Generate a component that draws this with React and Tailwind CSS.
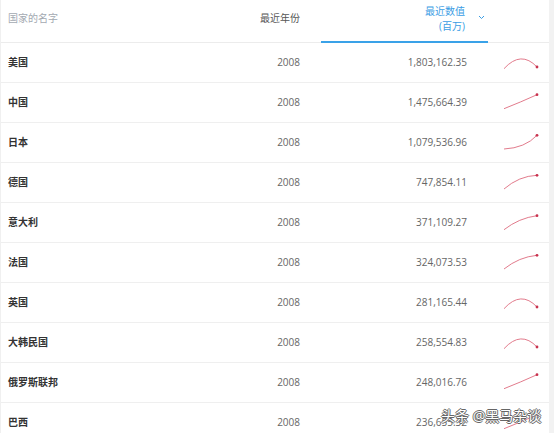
const font = { fontFamily: '"Open Sans", "Noto Sans CJK SC", sans-serif' };

const rows = [
  { name: "美国", year: "2008", value: "1,803,162.35", spark: "M3 15.7 Q20 -3 36 14", end: [36, 14] },
  { name: "中国", year: "2008", value: "1,475,664.39", spark: "M3 15.7 Q20 9 36 1.7", end: [36, 1.7] },
  { name: "日本", year: "2008", value: "1,079,536.96", spark: "M3 16 Q24 15 36 2.3", end: [36, 2.3] },
  { name: "德国", year: "2008", value: "747,854.11", spark: "M3 16 Q18 3 36 2.3", end: [36, 2.3] },
  { name: "意大利", year: "2008", value: "371,109.27", spark: "M3 16.7 Q18 5 36 2.7", end: [36, 2.7] },
  { name: "法国", year: "2008", value: "324,073.53", spark: "M3 16 Q18 4 36 2.3", end: [36, 2.3] },
  { name: "英国", year: "2008", value: "281,165.44", spark: "M3 15.7 Q20 -3 36 14", end: [36, 14] },
  { name: "大韩民国", year: "2008", value: "258,554.83", spark: "M3 15.7 Q20 -3 36 14", end: [36, 14] },
  { name: "俄罗斯联邦", year: "2008", value: "248,016.76", spark: "M3 15.7 Q20 9 36 1.7", end: [36, 1.7] },
  { name: "巴西", year: "2008", value: "236,655.32", spark: "M3 15.7 Q20 9 36 1.7", end: [36, 1.7] },
];

const Spark = ({ d, end }) => (
  <svg width="40" height="20" viewBox="0 0 40 20" className="ml-[13px]">
    <path d={d} fill="none" stroke="#e27b8c" strokeWidth="1" />
    <circle cx={end[0]} cy={end[1]} r="1.4" fill="#c8324e" />
  </svg>
);

export default function App() {
  return (
    <div className="relative w-[554px] h-[433px] overflow-hidden bg-white flex" style={font}>
      <div className="flex-1 flex flex-col border-l border-[#f0f0f0]">
        <div className="flex h-[43px] shrink-0 text-[10px]">
          <div className="w-[239px] flex items-center pl-[7px] pb-[5px] text-[#a3a9b1] border-b border-[#ececec]">
            国家的名字
          </div>
          <div className="w-[81px] flex items-center justify-end pr-[21px] pb-[5px] text-[#555] border-b border-[#ececec]">
            最近年份
          </div>
          <div className="w-[167px] flex items-center justify-end border-b-2 border-[#3aa2e8] text-[#3b9de4] pb-[3px]">
            <div className="text-right leading-[15px]">
              <div>最近数值</div>
              <div>(百万)</div>
            </div>
            <svg width="7" height="5" viewBox="0 0 7 5" className="ml-[13px] mr-[3px] mb-[4px]">
              <path d="M1 1 L3.5 3.5 L6 1" fill="none" stroke="#3b9de4" strokeWidth="1" />
            </svg>
          </div>
          <div className="flex-1 border-b border-[#ececec]" />
        </div>
        {rows.map((r) => (
          <div key={r.name} className="flex h-[40px] shrink-0 items-center border-b border-[#efefef] text-[10px]">
            <div className="w-[239px] pl-[7px] text-[#333] font-semibold">{r.name}</div>
            <div className="w-[81px] text-right pr-[21px] text-[#666]">{r.year}</div>
            <div className="w-[167px] text-right pr-[21px] text-[#666]">{r.value}</div>
            <Spark d={r.spark} end={r.end} />
          </div>
        ))}
      </div>
      <div className="w-[5px] shrink-0 bg-[#f2f2f2]" />
      <div className="absolute left-[441px] top-[405px] text-[14px] text-white [text-shadow:1px_0_0_#666,-1px_0_0_#666,0_1px_0_#666,0_-1px_0_#666]">
        头条 @黑马杂谈
      </div>
    </div>
  );
}
